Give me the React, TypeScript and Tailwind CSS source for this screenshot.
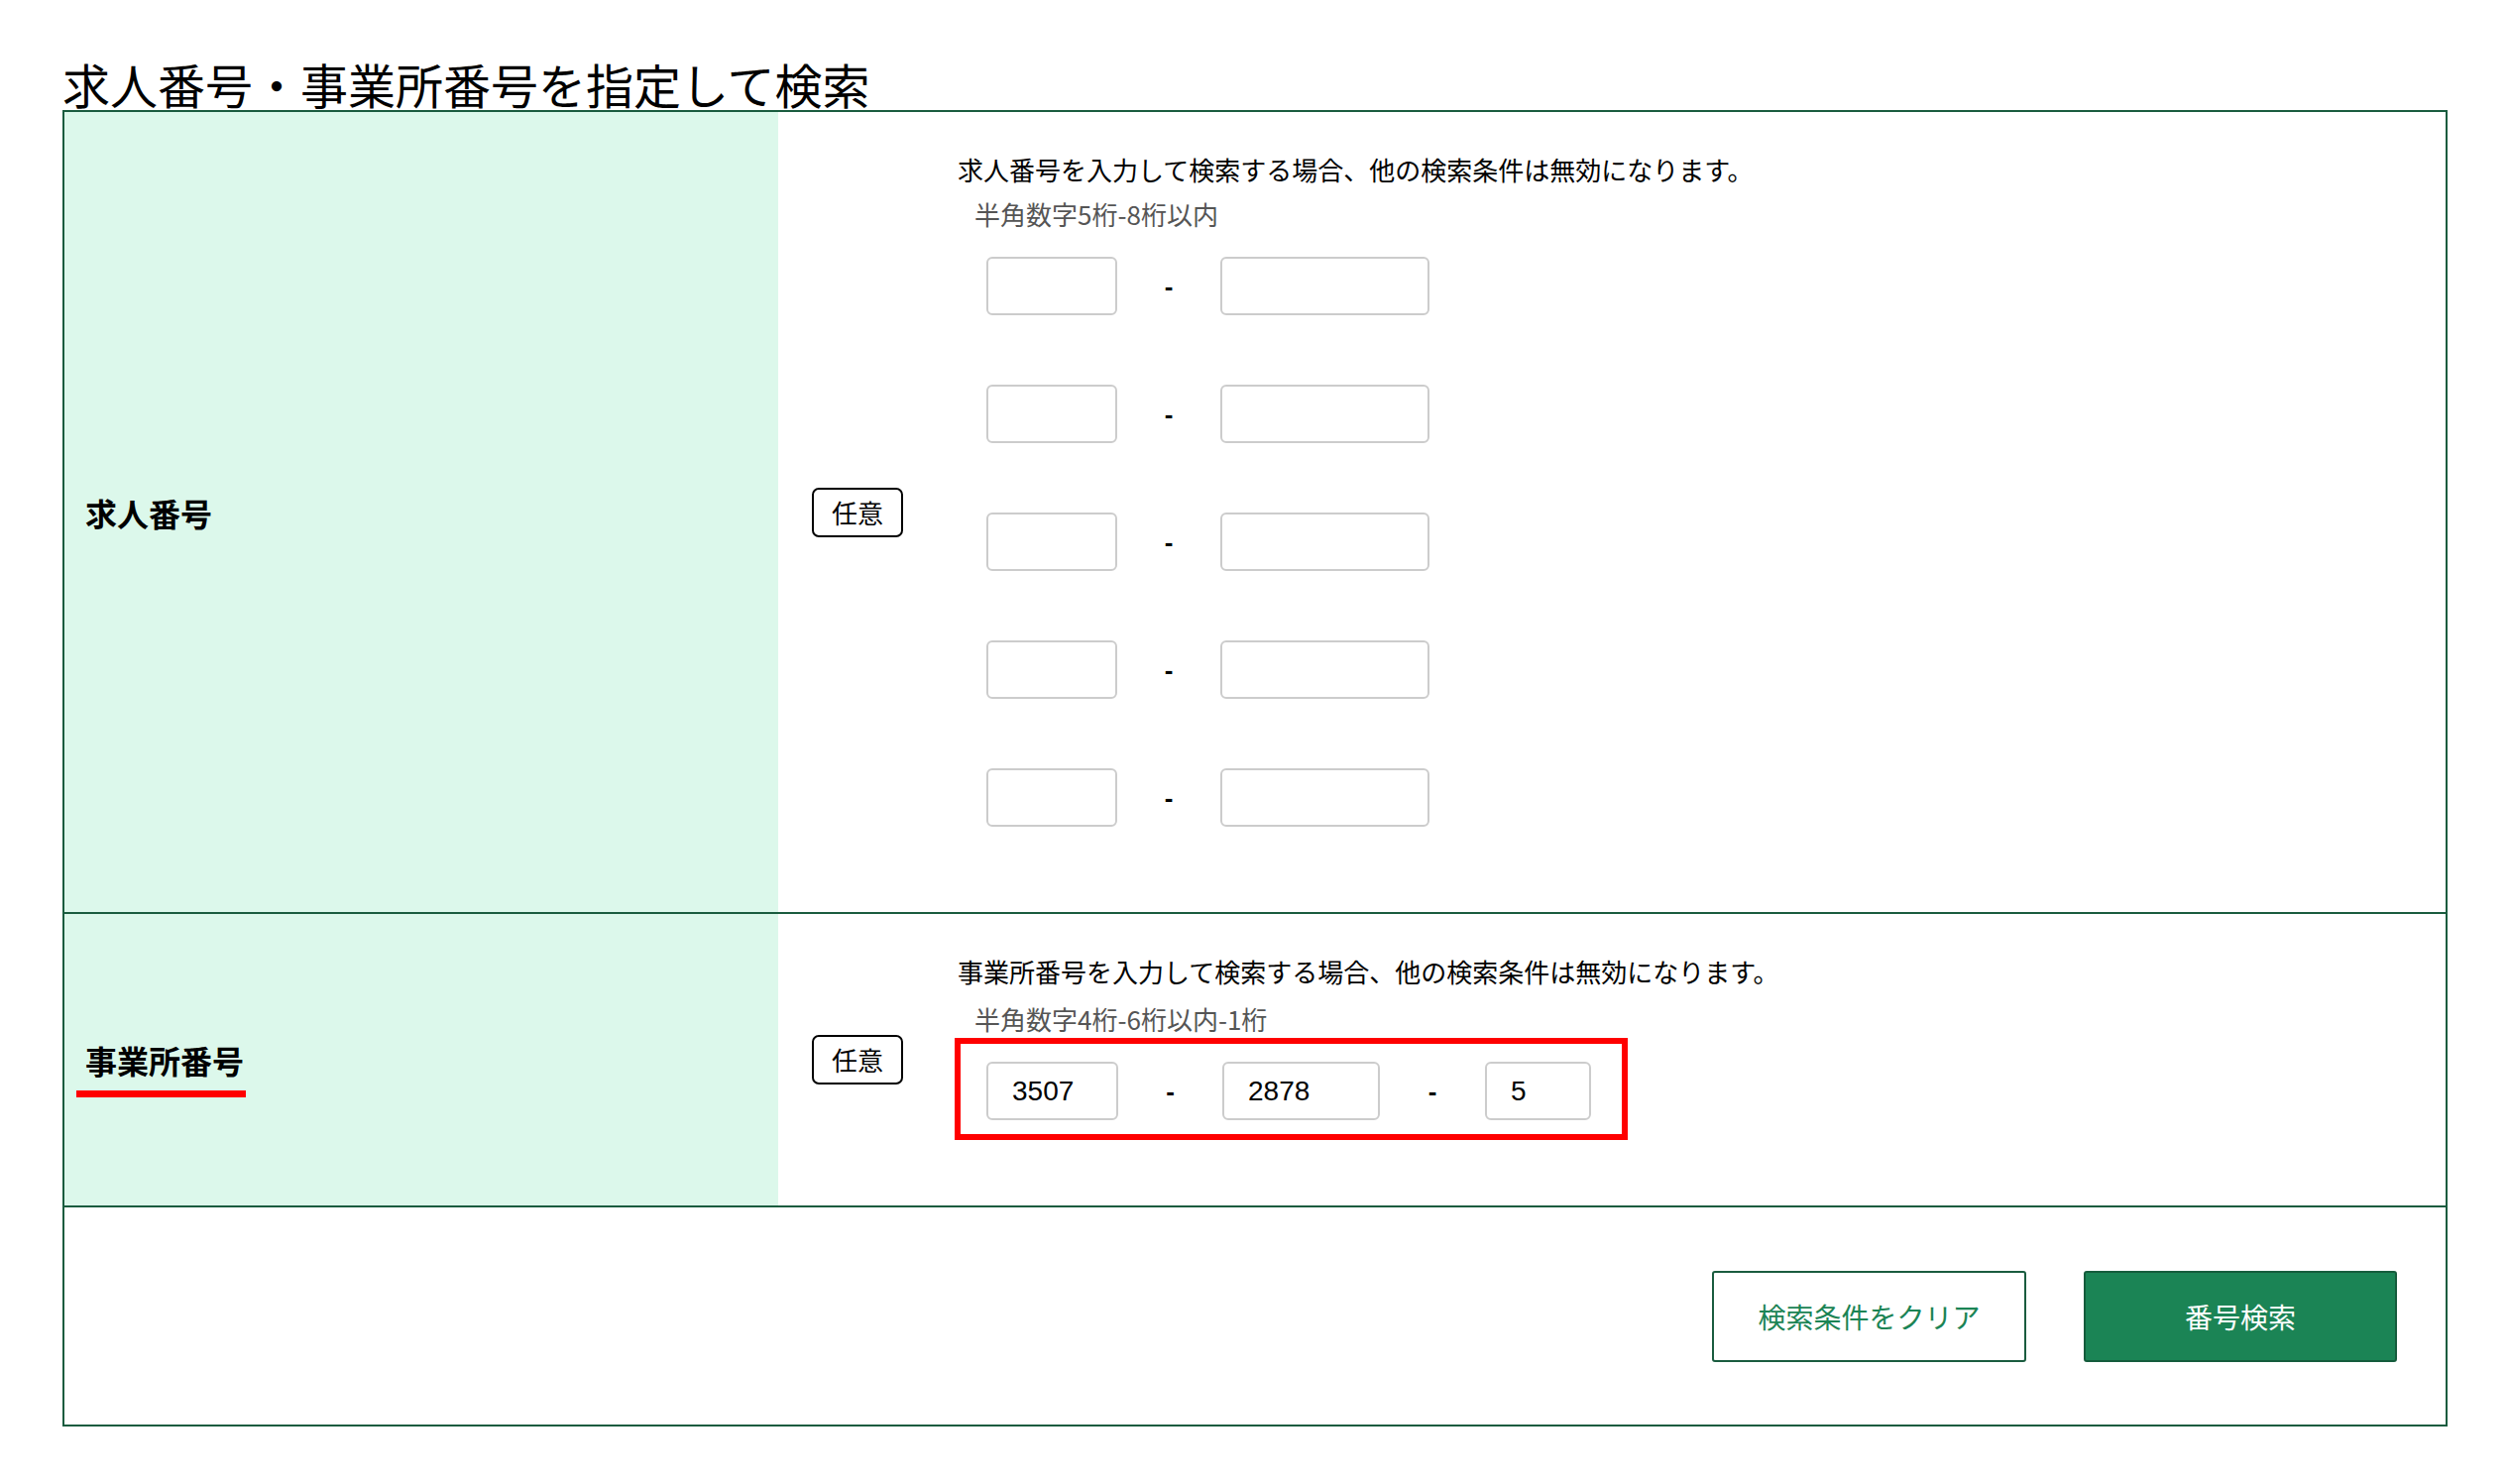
import React from 'react';

const FONT = '"Noto Sans CJK JP", "Noto Sans", sans-serif';
const NUM_FONT = '"Liberation Sans", "Noto Sans CJK JP", sans-serif';

interface FieldRowProps {
    label: React.ReactNode;
    description: string;
    hint: string;
    hintGap: string;
    bottomPad: string;
    children: React.ReactNode;
    bordered?: boolean;
}

const Badge: React.FC = () => (
    <span className="flex w-[92px] h-[50px] items-center justify-center rounded-[7px] border-2 border-black text-[26px] leading-none">
        任意
    </span>
);

const Dash: React.FC<{ width: string }> = ({ width }) => (
    <span className={`${width} text-center text-[26px] font-bold leading-none`} style={{ fontFamily: NUM_FONT }}>-</span>
);

const NumberInput: React.FC<{ width: string; value?: string }> = ({ width, value }) => (
    <input
        type="text"
        defaultValue={value}
        className={`${width} h-[59px] rounded-[6px] border-2 border-[#cccccc] bg-white px-[24px] text-[28px] text-black outline-none`}
        style={{ fontFamily: NUM_FONT }}
    />
);

const FieldRow: React.FC<FieldRowProps> = ({ label, description, hint, hintGap, bottomPad, children, bordered }) => (
    <div className={`flex ${bordered ? 'border-t-2 border-[#1a5c3f]' : ''}`}>
        <div className="flex w-[720px] shrink-0 items-center bg-[#dcf8eb] pl-[21px]">
            {label}
        </div>
        <div className="flex w-[181px] shrink-0 items-center pl-[34px]">
            <Badge />
        </div>
        <div className={`flex flex-col pt-[38px] ${bottomPad}`}>
            <p className="text-[26px] leading-[39px] text-black">{description}</p>
            <p className={`${hintGap} pl-[17px] text-[26px] leading-[39px] text-[#555555]`}>{hint}</p>
            <div className="mt-[24px] pl-[29px]">{children}</div>
        </div>
    </div>
);

const App: React.FC = () => {
    const jobRows = [0, 1, 2, 3, 4];

    return (
        <div className="min-h-screen bg-white pb-[60px] text-black" style={{ fontFamily: FONT }}>
            <h1 className="mx-[63px] mt-[57px] text-[48px] font-normal leading-[54px]">
                求人番号・事業所番号を指定して検索
            </h1>

            <div className="mx-[63px] border-2 border-[#1a5c3f]">
                {/* 求人番号 */}
                <FieldRow
                    label={<span className="text-[32px] font-bold leading-[48px]">求人番号</span>}
                    description="求人番号を入力して検索する場合、他の検索条件は無効になります。"
                    hint="半角数字5桁-8桁以内"
                    hintGap="mt-[6px]"
                    bottomPad="pb-[86px]"
                >
                    <div className="flex flex-col gap-[70px]">
                        {jobRows.map((i) => (
                            <div key={i} className="flex items-center">
                                <NumberInput width="w-[132px]" />
                                <Dash width="w-[104px]" />
                                <NumberInput width="w-[211px]" />
                            </div>
                        ))}
                    </div>
                </FieldRow>

                {/* 事業所番号 */}
                <FieldRow
                    bordered
                    label={
                        <span className="relative text-[32px] font-bold leading-[48px]">
                            事業所番号
                            <span className="absolute -left-[9px] top-[calc(100%+7px)] h-[7px] w-[171px] bg-[#ff0000]" />
                        </span>
                    }
                    description="事業所番号を入力して検索する場合、他の検索条件は無効になります。"
                    hint="半角数字4桁-6桁以内-1桁"
                    hintGap="mt-[9px]"
                    bottomPad="pb-[86px]"
                >
                    <div className="relative inline-flex items-center">
                        <NumberInput width="w-[133px]" value="3507" />
                        <Dash width="w-[105px]" />
                        <NumberInput width="w-[159px]" value="2878" />
                        <Dash width="w-[106px]" />
                        <NumberInput width="w-[107px]" value="5" />
                        <span className="pointer-events-none absolute -left-[32px] -top-[24px] -right-[37px] -bottom-[20px] border-[6px] border-[#ff0000]" />
                    </div>
                </FieldRow>

                {/* buttons */}
                <div className="flex h-[221px] items-center justify-end gap-[58px] border-t-2 border-[#1a5c3f] pr-[49px]">
                    <button className="h-[92px] w-[317px] rounded-[3px] border-2 border-[#1a5c3f] bg-white text-[28px] text-[#1b8455]">
                        検索条件をクリア
                    </button>
                    <button className="h-[92px] w-[316px] rounded-[3px] border-2 border-[#155c3c] bg-[#1b8455] text-[28px] text-white">
                        番号検索
                    </button>
                </div>
            </div>
        </div>
    );
};

export default App;
